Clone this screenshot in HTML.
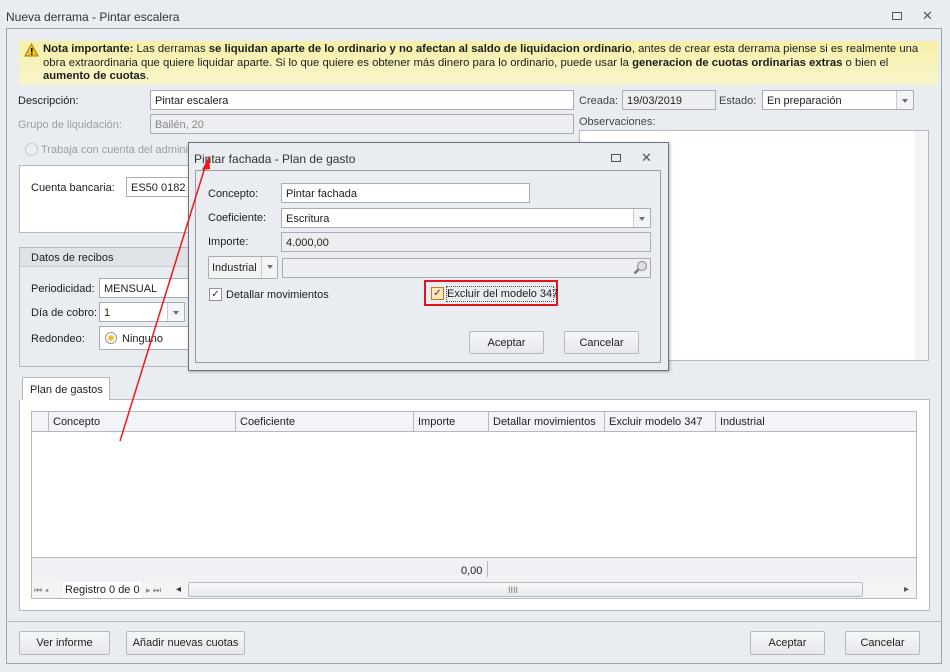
<!DOCTYPE html>
<html><head><meta charset="utf-8"><style>
*{box-sizing:border-box;margin:0;padding:0}
body{width:950px;height:672px;overflow:hidden;background:#e9ecf1;font-family:"Liberation Sans",sans-serif;font-size:11px;color:#1e1e1e;position:relative}
.a{position:absolute}
.lbl{position:absolute;white-space:nowrap;line-height:14px}
.in{position:absolute;background:#fff;border:1px solid #a8acb3;padding:3px 4px 1px;line-height:14px;white-space:nowrap;overflow:hidden}
.dis{background:#eceef1;color:#555}
.btn{position:absolute;background:linear-gradient(#f6f7f9,#e6e8ec);border:1px solid #b5b9c0;border-radius:2px;text-align:center;line-height:22px}
.dd{position:absolute;top:0;right:0;bottom:0;width:17px;border-left:1px solid #c8ccd2;background:#f3f4f6}
.dd:after{content:"";position:absolute;left:5px;top:8px;border:3.5px solid transparent;border-top:4px solid #6b6f75}
.g{color:#9a9ea4}
.col{position:absolute;top:0;height:20px;border-left:1px solid #b5b9c0;padding-left:4px;line-height:20px}
.cb{position:absolute;width:13px;height:13px;border:1px solid #8e9399;background:#fff;font-size:10px;line-height:11px;text-align:center;color:#333}
</style></head><body>
<div class="lbl" style="left:6px;top:10px;color:#333;font-size:12px">Nueva derrama - Pintar escalera</div>
<div class="a" style="left:892px;top:12px;width:10px;height:8px;border:1px solid #555"></div>
<div class="lbl" style="left:922px;top:9px;font-size:13px;color:#555">✕</div>
<div class="a" style="left:6px;top:28px;width:936px;height:636px;border:1px solid #a0a4aa"></div>
<div class="a" style="left:6px;top:621px;width:936px;height:1px;background:#b5b9c0"></div>
<!-- note -->
<div class="a" style="left:19px;top:41px;width:919px;height:44px;background:linear-gradient(#f6f0a8,#f8f5cc)"></div>
<svg class="a" style="left:24px;top:43px" width="15" height="14"><path d="M7.5 1L14 13H1Z" fill="#f3c22c" stroke="#9a7a10"/><rect x="7" y="5" width="1.5" height="4.5" fill="#000"/><rect x="7" y="10.5" width="1.5" height="1.5" fill="#000"/></svg>
<div class="lbl" style="left:43px;top:43px;width:885px;line-height:13.5px;white-space:normal;font-size:11.3px"><b>Nota importante:</b> Las derramas <b>se liquidan aparte de lo ordinario y no afectan al saldo de liquidacion ordinario</b>, antes de crear esta derrama piense si es realmente una obra extraordinaria que quiere liquidar aparte. Si lo que quiere es obtener más dinero para lo ordinario, puede usar la <b>generacion de cuotas ordinarias extras</b> o bien el <b>aumento de cuotas</b>.</div>
<div class="lbl" style="left:18px;top:94px">Descripción:</div>
<div class="in" style="left:150px;top:90px;width:424px;height:20px">Pintar escalera</div>
<div class="lbl g" style="left:18px;top:118px">Grupo de liquidación:</div>
<div class="in dis" style="left:150px;top:114px;width:424px;height:20px;color:#888">Bailén, 20</div>
<div class="a" style="left:25px;top:143px;width:13px;height:13px;border-radius:50%;border:1px solid #c4c7cc;background:#eee"></div>
<div class="lbl g" style="left:41px;top:143px">Trabaja con cuenta del adminis</div>
<div class="a" style="left:19px;top:165px;width:180px;height:68px;background:#fff;border:1px solid #b5b9c0"></div>
<div class="lbl" style="left:31px;top:181px">Cuenta bancaria:</div>
<div class="in" style="left:126px;top:177px;width:70px;height:20px">ES50 0182 0</div>
<div class="a" style="left:19px;top:247px;width:180px;height:120px;border:1px solid #b5b9c0"></div>
<div class="a" style="left:20px;top:248px;width:178px;height:19px;background:#dfe2e7;border-bottom:1px solid #c8ccd2"></div>
<div class="lbl" style="left:31px;top:251px">Datos de recibos</div>
<div class="lbl" style="left:31px;top:282px">Periodicidad:</div>
<div class="in" style="left:99px;top:278px;width:95px;height:20px">MENSUAL</div>
<div class="lbl" style="left:31px;top:306px">Día de cobro:</div>
<div class="in" style="left:99px;top:302px;width:86px;height:20px">1<div class="dd"></div></div>
<div class="lbl" style="left:31px;top:332px">Redondeo:</div>
<div class="in" style="left:99px;top:326px;width:95px;height:24px;padding-top:5px;padding-left:22px">Ninguno</div>
<div class="a" style="left:105px;top:332px;width:12px;height:12px;border-radius:50%;border:1px solid #999;background:radial-gradient(#f3c020 35%,#fff 45%)"></div>
<!-- right -->
<div class="lbl" style="left:579px;top:94px;color:#444">Creada:</div>
<div class="in dis" style="left:622px;top:90px;width:94px;height:20px;color:#222">19/03/2019</div>
<div class="lbl" style="left:719px;top:94px;color:#444">Estado:</div>
<div class="in" style="left:762px;top:90px;width:152px;height:20px">En preparación<div class="dd"></div></div>
<div class="lbl" style="left:579px;top:115px;color:#444">Observaciones:</div>
<div class="a" style="left:579px;top:130px;width:350px;height:231px;background:#fff;border:1px solid #b5b9c0"></div>
<div class="a" style="left:915px;top:131px;width:13px;height:229px;background:#f3f4f6"></div>
<!-- tab panel -->
<div class="a" style="left:22px;top:377px;width:88px;height:24px;background:#fff;border:1px solid #b5b9c0;border-bottom:none"></div>
<div class="lbl" style="left:30px;top:383px">Plan de gastos</div>
<div class="a" style="left:19px;top:400px;width:911px;height:211px;background:#fff;border:1px solid #b5b9c0;border-top:none"></div>
<div class="a" style="left:110px;top:399px;width:820px;height:1px;background:#b5b9c0"></div>
<div class="a" style="left:31px;top:411px;width:886px;height:188px;border:1px solid #b5b9c0;background:#fff"></div>
<div class="a" style="left:32px;top:412px;width:884px;height:20px;background:#f2f4f7;border-bottom:1px solid #b5b9c0">
<div class="col" style="left:16px">Concepto</div><div class="col" style="left:203px">Coeficiente</div><div class="col" style="left:381px">Importe</div><div class="col" style="left:456px">Detallar movimientos</div><div class="col" style="left:572px">Excluir modelo 347</div><div class="col" style="left:683px">Industrial</div></div>
<div class="a" style="left:32px;top:557px;width:884px;height:26px;background:#eff1f4;border-top:1px solid #b5b9c0"></div>
<div class="lbl" style="left:461px;top:564px">0,00</div>
<div class="a" style="left:487px;top:561px;width:1px;height:16px;background:#b5b9c0"></div>
<div class="a" style="left:32px;top:582px;width:884px;height:16px;background:#f3f4f6"></div>
<div class="lbl" style="left:34px;top:583px;color:#888;font-size:9px">⏮ ◂</div>
<div class="a" style="left:63px;top:582px;width:78px;height:16px;background:#fff"></div>
<div class="lbl" style="left:65px;top:583px">Registro 0 de 0</div>
<div class="lbl" style="left:146px;top:583px;color:#888;font-size:9px">▸ ⏭</div>
<div class="lbl" style="left:176px;top:583px;color:#333;font-size:10px">◂</div>
<div class="a" style="left:188px;top:582px;width:675px;height:15px;border:1px solid #b5b9c0;border-radius:2px;background:linear-gradient(#f8f8f9,#e6e8eb)"></div>
<div class="lbl" style="left:508px;top:583px;color:#777;font-size:9px">IIII</div>
<div class="lbl" style="left:904px;top:583px;color:#555;font-size:10px">▸</div>
<!-- bottom buttons -->
<div class="btn" style="left:19px;top:631px;width:91px;height:24px">Ver informe</div>
<div class="btn" style="left:126px;top:631px;width:119px;height:24px">Añadir nuevas cuotas</div>
<div class="btn" style="left:750px;top:631px;width:75px;height:24px">Aceptar</div>
<div class="btn" style="left:845px;top:631px;width:75px;height:24px">Cancelar</div>
<!-- dialog -->
<div class="a" style="left:188px;top:142px;width:481px;height:229px;background:#e9ecf1;border:1px solid #6f7379;box-shadow:1px 1px 3px rgba(0,0,0,.3)"></div>
<div class="lbl" style="left:194px;top:152px;color:#333;font-size:12px">Pintar fachada - Plan de gasto</div>
<div class="a" style="left:611px;top:154px;width:10px;height:8px;border:1px solid #555"></div>
<div class="lbl" style="left:641px;top:151px;font-size:13px;color:#555">✕</div>
<div class="a" style="left:195px;top:170px;width:466px;height:193px;border:1px solid #9a9ea4"></div>
<div class="lbl" style="left:208px;top:187px">Concepto:</div>
<div class="in" style="left:281px;top:183px;width:249px;height:20px">Pintar fachada</div>
<div class="lbl" style="left:208px;top:211px">Coeficiente:</div>
<div class="in" style="left:281px;top:208px;width:370px;height:20px">Escritura<div class="dd"></div></div>
<div class="lbl" style="left:208px;top:235px">Importe:</div>
<div class="in dis" style="left:281px;top:232px;width:370px;height:20px;color:#222">4.000,00</div>
<div class="in" style="left:208px;top:256px;width:70px;height:23px;background:#f2f3f5;border-radius:2px;padding-top:4px;padding-left:3px">Industrial<div class="dd" style="width:16px"></div></div>
<div class="in dis" style="left:282px;top:258px;width:369px;height:20px"></div>
<svg class="a" style="left:633px;top:260px" width="15" height="15"><circle cx="9" cy="6" r="4.5" fill="#ddd" stroke="#888"/><path d="M5.5 9.5L1.5 13.5" stroke="#777" stroke-width="2.5"/></svg>
<div class="cb" style="left:209px;top:288px">✓</div>
<div class="lbl" style="left:226px;top:288px">Detallar movimientos</div>
<div class="a" style="left:424px;top:280px;width:134px;height:26px;border:2px solid #e0141c"></div>
<div class="cb" style="left:431px;top:287px;border-color:#c97a1a;background:#fde7b8">✓</div>
<div class="a" style="left:446px;top:286px;width:108px;height:16px;border:1px dotted #555"></div>
<div class="lbl" style="left:447px;top:287px">Excluir del modelo 347</div>
<div class="btn" style="left:469px;top:331px;width:75px;height:23px">Aceptar</div>
<div class="btn" style="left:564px;top:331px;width:75px;height:23px">Cancelar</div>
<!-- red arrow -->
<svg class="a" style="left:0;top:0" width="950" height="672"><line x1="120" y1="441" x2="206" y2="164" stroke="#f01818" stroke-width="1.5"/><path d="M209 156L202 170L210 169Z" fill="#f01818"/></svg>
</body></html>
